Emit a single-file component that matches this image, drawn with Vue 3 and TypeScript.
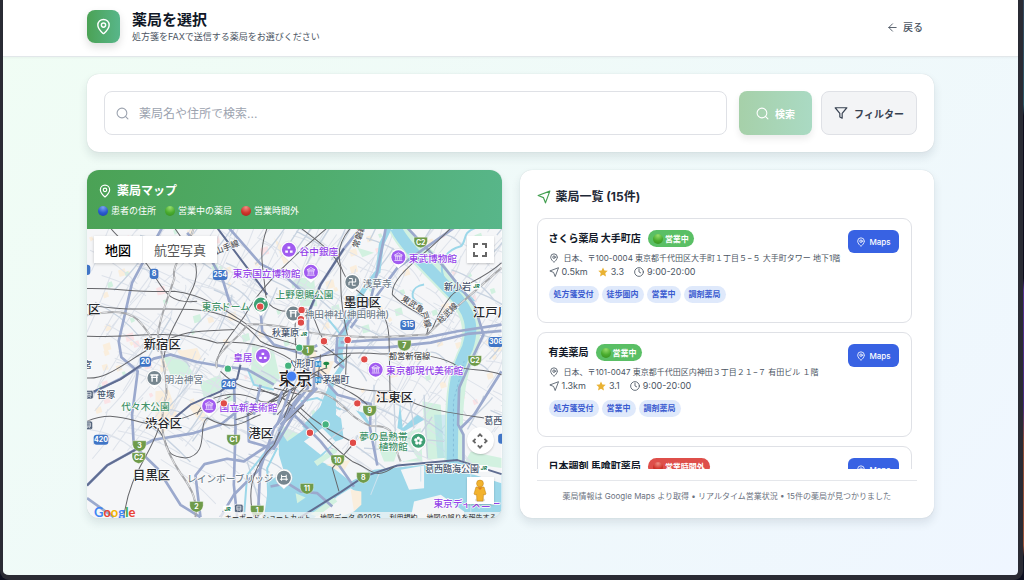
<script setup lang="ts">
import { ref } from 'vue'

interface Store {
  name: string
  open: boolean
  address?: string
  distance?: string
  rating?: string
  hours?: string
  tags: string[]
}
interface Label {
  x: number
  y: number
  text: string
  tone: 'ward' | 'city' | 'culture' | 'park' | 'site' | 'station' | 'line'
  rotate?: number
}

const keyword = ref('')

const stores: Store[] = [
  {
    name: 'さくら薬局 大手町店',
    open: true,
    address: '日本、〒100-0004 東京都千代田区大手町１丁目５−５ 大手町タワー 地下1階',
    distance: '0.5km',
    rating: '3.3',
    hours: '9:00-20:00',
    tags: ['処方箋受付', '徒歩圏内', '営業中', '調剤薬局'],
  },
  {
    name: '有美薬局',
    open: true,
    address: '日本、〒101-0047 東京都千代田区内神田３丁目２１−７ 有田ビル １階',
    distance: '1.3km',
    rating: '3.1',
    hours: '9:00-20:00',
    tags: ['処方箋受付', '営業中', '調剤薬局'],
  },
  { name: '日本調剤 馬喰町薬局', open: false, tags: [] },
]

const legend = [
  { tone: 'blue', text: '患者の住所' },
  { tone: 'green', text: '営業中の薬局' },
  { tone: 'red', text: '営業時間外' },
]

const labels: Label[] = [
  { x: 3, y: 259, text: '区', tone: 'ward' },
  { x: 170, y: 364, text: '新宿区', tone: 'ward' },
  { x: 174, y: 601, text: '渋谷区', tone: 'ward' },
  { x: 138, y: 757, text: '目黒区', tone: 'ward' },
  { x: 484, y: 630, text: '港区', tone: 'ward' },
  { x: 770, y: 236, text: '墨田区', tone: 'ward' },
  { x: 866, y: 521, text: '江東区', tone: 'ward' },
  { x: 1156, y: 266, text: '江戸川', tone: 'ward' },
  { x: 574, y: 470, text: '東京', tone: 'city' },
  { x: 637, y: 80, text: '谷中銀座', tone: 'culture' },
  { x: 437, y: 146, text: '東京国立博物館', tone: 'culture' },
  { x: 964, y: 102, text: '東武博物館', tone: 'culture' },
  { x: 438, y: 399, text: '皇居', tone: 'culture' },
  { x: 896, y: 439, text: '東京都現代美術館', tone: 'culture' },
  { x: 397, y: 549, text: '国立新美術館', tone: 'culture' },
  { x: 1038, y: 837, text: '東京ディズニー', tone: 'culture' },
  { x: 565, y: 211, text: '上野恩賜公園', tone: 'park' },
  { x: 344, y: 245, text: '東京ドーム', tone: 'park' },
  { x: 103, y: 546, text: '代々木公園', tone: 'park' },
  { x: 816, y: 637, text: '夢の島熱帯', tone: 'park' },
  { x: 874, y: 667, text: '植物館', tone: 'park' },
  { x: 826, y: 177, text: '浅草寺', tone: 'site' },
  { x: 652, y: 271, text: '神田神社(神田明神)', tone: 'site' },
  { x: 232, y: 464, text: '明治神宮', tone: 'site' },
  { x: 300, y: 763, text: 'レインボーブリッジ', tone: 'site' },
  { x: 1070, y: 187, text: '新小岩', tone: 'station' },
  { x: 554, y: 325, text: '秋葉原', tone: 'station' },
  { x: 600, y: 416, text: '人形町', tone: 'station' },
  { x: 706, y: 466, text: '茅場町', tone: 'station' },
  { x: 30, y: 510, text: '笹塚', tone: 'station' },
  { x: -12, y: 420, text: '宮', tone: 'station' },
  { x: 1190, y: 587, text: '葛西', tone: 'station' },
  { x: 1013, y: 731, text: '葛西臨海公園', tone: 'station' },
  { x: 904, y: 394, text: '都営新宿線', tone: 'line' },
  { x: 388, y: 80, text: '山手線', tone: 'line', rotate: -22 },
  { x: 812, y: 62, text: '常磐線', tone: 'line', rotate: -72 },
  { x: 940, y: 216, text: '東武亀', tone: 'line', rotate: 33 },
  { x: 1000, y: 254, text: '戸線', tone: 'line', rotate: 72 },
  { x: 1060, y: 288, text: '総武線', tone: 'line', rotate: -45 },
]

const pois = [
  { x: 605, y: 66, kind: 'dots', color: '#a15cf0' },
  { x: 671, y: 132, kind: 'museum', color: '#a15cf0' },
  { x: 933, y: 88, kind: 'museum', color: '#a15cf0' },
  { x: 527, y: 384, kind: 'dots', color: '#a15cf0' },
  { x: 865, y: 425, kind: 'museum', color: '#a15cf0' },
  { x: 366, y: 534, kind: 'museum', color: '#a15cf0' },
  { x: 521, y: 230, kind: 'plain', color: '#3f9f74' },
  { x: 993, y: 638, kind: 'flower', color: '#3f9f74' },
  { x: 795, y: 162, kind: 'temple', color: '#76868f' },
  { x: 618, y: 257, kind: 'shrine', color: '#76868f' },
  { x: 202, y: 450, kind: 'shrine', color: '#76868f' },
  { x: 590, y: 749, kind: 'bridge', color: '#76868f' },
]

const expressways = [
  { x: 1000, y: 43, text: 'C2' },
  { x: 1162, y: 398, text: 'C2' },
  { x: 155, y: 689, text: 'C2' },
  { x: 439, y: 635, text: 'C1' },
  { x: 157, y: 653, text: '3' },
  { x: 328, y: 835, text: '2' },
  { x: 510, y: 847, text: '1' },
  { x: 661, y: 367, text: '1' },
  { x: 951, y: 352, text: '7' },
  { x: 847, y: 548, text: '9' },
  { x: 751, y: 696, text: '10' },
  { x: 828, y: 748, text: '8' },
  { x: 659, y: 781, text: '11' },
]

const routes = [
  { x: 201, y: 138, text: '8', w: 26 },
  { x: 399, y: 141, text: '254', w: 44 },
  { x: 175, y: 401, text: '20', w: 34 },
  { x: 425, y: 469, text: '246', w: 44 },
  { x: 42, y: 635, text: '420', w: 44 },
  { x: 961, y: 291, text: '315', w: 44 },
  { x: 1225, y: 342, text: '308', w: 44 },
  { x: -2, y: 126, text: '', w: 24 },
  { x: 1244, y: 632, text: '', w: 24 },
]

const markers = [
  { x: 519, y: 236, open: false },
  { x: 643, y: 246, open: false },
  { x: 641, y: 274, open: false },
  { x: 641, y: 284, open: false },
  { x: 710, y: 340, open: false },
  { x: 781, y: 336, open: false },
  { x: 831, y: 394, open: false },
  { x: 810, y: 526, open: false },
  { x: 410, y: 526, open: false },
  { x: 668, y: 614, open: false },
  { x: 797, y: 644, open: false },
  { x: 636, y: 359, open: true },
  { x: 603, y: 413, open: true },
  { x: 422, y: 422, open: true },
  { x: 715, y: 589, open: true },
]

const highways = [
  'M225 0 L180 80 L135 165 L95 340 L103 388 L152 430 L135 560 L140 650',
  'M0 503 L100 452 L200 392 L250 380 L330 402 L400 414 L480 424 L560 470',
  'M0 772 L60 712 L150 662 L200 635 L320 615 L400 590 L440 558 L480 520',
  'M150 662 L212 722 L280 830 L340 867',
  'M300 15 L370 92 L408 160 L430 232',
  'M340 867 L325 742 L352 708 L420 692 L470 700 L560 640',
  'M440 450 L445 600 L440 770 L450 867',
  'M480 520 L485 640 L560 662 L620 560 L680 480 L680 395 L740 365',
  'M425 0 L520 108 L600 150 L660 205',
  'M520 245 L525 310 L560 350 L640 376 L690 352',
  'M820 0 L770 62 L700 170 L662 262 L662 480 L600 560 L560 650 L520 700 L512 867',
  'M1242 309 L1140 318 L1030 344 L900 358 L750 360 L745 400 L770 420',
  'M1242 290 L1110 310 L1010 330 L860 336 L760 343',
  'M690 432 L750 500 L850 528 L848 600 L870 712',
  'M620 560 L700 640 L740 690 L800 776',
  'M550 775 L600 765 L640 790 L690 795 L735 835',
  'M960 0 L1065 112 L1160 230 L1188 320 L1150 400 L1115 480 L1112 590 L1128 620 L1128 700',
  'M1100 0 L1000 70 L930 120 L860 215 L790 275 L750 330 L745 395',
  'M790 300 L850 215 L870 130 L890 30 L895 0',
  'M400 867 L440 800 L520 720 L560 600 L640 500',
  'M0 810 L80 867',
  'M1242 430 L1160 560 L1120 600',
]
const trunks = [
  'M640 867 L760 792 L830 745 L930 712 L1110 696 L1242 738',
  'M250 580 L310 530 L400 490 L450 452 L460 410',
  'M660 262 L700 170 L770 62',
  'M390 0 L480 120 L540 200',
  'M0 500 L100 454 L170 405',
  'M0 772 L60 712 L150 662',
]
const railways = [
  'M320 0 C300 70 250 110 262 150 C240 220 220 260 212 320 C230 400 240 460 238 500 C210 600 230 660 280 735 C320 790 330 820 325 867',
  'M0 262 C70 250 130 240 165 290 C200 330 200 350 215 370',
  'M390 420 C370 380 460 330 480 290 C540 285 600 300 630 305 C720 330 790 325 880 328 L1020 320 L1110 235 L1242 120',
  'M640 490 C760 480 760 560 850 594 C940 590 910 640 940 700',
]
const subways = [
  'M0 182 C90 180 150 195 262 190 C350 200 420 250 480 290 C530 330 590 335 640 355',
  'M0 325 C150 330 260 300 390 345 C480 335 560 360 620 400 C700 460 790 480 840 530',
  'M0 230 C150 260 300 225 400 260 C440 270 480 290 520 340 C570 370 620 360 690 370',
  'M70 0 C100 40 140 60 180 110 C230 180 235 230 330 220',
  'M262 0 C320 80 350 125 310 195 C280 270 240 310 230 390',
  'M388 412 C390 360 450 300 475 260 C500 210 550 150 650 60 L720 0',
  'M540 0 C510 80 530 120 535 200 C540 250 600 260 640 240 C690 240 680 310 720 350',
  'M640 0 C690 40 740 70 760 120 C760 190 760 230 780 320 L775 440',
  'M790 0 C730 70 760 130 790 170 C850 230 900 230 905 330 L908 490',
  'M1090 0 C1020 80 910 140 915 200 C980 270 1040 250 1018 318',
  'M700 425 C760 480 820 490 920 490 C980 540 1060 550 1190 570',
  'M640 395 C720 380 790 370 880 378 C980 375 1070 385 1110 415 C1140 430 1190 420 1242 440',
  'M430 505 C350 540 310 575 200 590 C130 580 80 545 0 580',
  'M0 450 C60 455 110 405 200 355 C300 300 350 310 440 305',
  'M215 600 C180 700 130 730 110 867',
  'M210 600 C260 660 220 680 295 690 C370 680 330 590 360 570 C450 620 480 570 520 560',
  'M445 575 C540 550 590 500 620 430 C640 380 610 310 630 250',
  'M400 430 C470 500 520 480 570 500 C650 550 720 650 795 700 C850 720 860 760 920 716',
  'M640 540 C700 600 760 620 800 645 L735 720 L755 790',
  'M330 560 C350 500 450 480 520 520 C600 540 650 430 720 420',
  'M500 867 C470 760 520 690 560 650 L610 540',
  'M1242 105 C1180 160 1120 170 1090 205 C1030 280 1050 300 1015 320',
]
const creeks = [
  'M1165 0 C1120 15 1140 40 1120 55 C1060 70 1050 130 1080 165 C1090 180 1140 190 1160 220',
  'M1010 170 C970 175 960 215 1005 230',
  'M700 245 L760 320 L750 385',
  'M640 520 L690 510 L760 545',
  'M850 640 L930 650 L950 700',
  'M480 420 L500 470 L560 485',
]
const greens = [
  'M495 350 L560 370 L578 450 L545 490 L490 460 Z',
  'M228 384 L290 392 L322 440 L290 468 L250 440 Z',
  'M338 464 L400 440 L410 482 L350 508 Z',
  'M630 150 L680 150 L690 235 L640 235 Z',
  'M580 590 L640 620 L590 670 Z',
  'M940 620 L1000 600 L1005 700 L940 700 Z',
  'M1005 520 L1060 530 L1070 690 L1020 695 Z',
  'M1150 670 L1242 690 L1242 720 L1130 705 Z',
  'M980 25 L1050 80 L1100 150 L1060 150 Z',
  'M810 60 L860 75 L825 88 Z',
]
const sands = [
  'M205 490 L245 485 L270 560 L225 620 L205 560 Z',
  'M270 370 L330 360 L345 395 L290 395 Z',
  'M560 30 L620 90 L590 110 Z',
  'M250 55 L285 75 L260 100 Z',
  'M680 400 L740 400 L720 450 L670 440 Z',
  'M300 530 L345 520 L360 590 L330 570 Z',
  'M860 500 L940 505 L930 525 L860 525 Z',
  'M720 705 L790 690 L770 725 L730 722 Z',
]

/* Repeatable pseudo-random sequence for the side streets. */
let seed = 11
function next(): number {
  seed = (seed * 16807) % 2147483647
  return seed / 2147483647
}
function sideStreets(count: number): string {
  let d = ''
  for (let i = 0; i < count; i++) {
    const x = Math.round(next() * 1242)
    const y = Math.round(next() * 700)
    const angle = next() > 0.5 ? 0.35 + next() * 0.4 : -1.2 + next() * 0.4
    const length = 60 + next() * 160
    const dx = Math.round(Math.cos(angle) * length)
    const dy = Math.round(Math.sin(angle) * length)
    d += `M${x} ${y}q${Math.round(dx / 2 + next() * 24)} ${Math.round(dy / 2 - next() * 24)} ${dx} ${dy}`
  }
  return d
}
function blocks(count: number): string {
  let d = ''
  for (let i = 0; i < count; i++) {
    const x = Math.round(next() * 1220)
    const y = Math.round(next() * 560)
    const s = Math.round(8 + next() * 16)
    d += `M${x} ${y}l${s} ${-Math.round(s / 3)}l5 ${s}l${-s} 6z`
  }
  return d
}
const minorStreets = sideStreets(330)
const midStreets = sideStreets(75)
const sandBlocks = blocks(70)
const parkBlocks = blocks(40)
const careBlocks = blocks(22)

const pinPath = 'M20 10c0 4.993-5.539 10.193-7.399 11.799a1 1 0 0 1-1.202 0C9.539 20.193 4 14.993 4 10a8 8 0 0 1 16 0'
</script>

<template>
  <div class="desktop">
    <div class="window">
      <header class="topbar">
        <div class="container topbar-row">
          <div class="brand">
            <span class="logo">
              <svg class="icon" viewBox="0 0 24 24" width="17" height="17"><path :d="pinPath" /><circle cx="12" cy="10" r="3" /></svg>
            </span>
            <div>
              <h1>薬局を選択</h1>
              <p class="subtitle">処方箋をFAXで送信する薬局をお選びください</p>
            </div>
          </div>
          <button type="button" class="back">
            <svg class="icon" viewBox="0 0 24 24" width="11" height="11"><path d="M20 12H4M12 20l-8-8 8-8" /></svg>
            戻る
          </button>
        </div>
      </header>

      <main class="container content">
        <form class="card search" @submit.prevent>
          <div class="field">
            <svg class="icon" viewBox="0 0 24 24" width="13" height="13"><circle cx="11" cy="11" r="9" /><path d="m22 22-4.5-4.5" /></svg>
            <input v-model="keyword" type="text" placeholder="薬局名や住所で検索..." aria-label="薬局名や住所で検索" />
          </div>
          <div class="search-actions">
            <button type="submit" class="btn-search">
              <svg class="icon" viewBox="0 0 24 24" width="13" height="13"><circle cx="11" cy="11" r="9" /><path d="m22 22-4.5-4.5" /></svg>
              検索
            </button>
            <button type="button" class="btn-filter">
              <svg class="icon" viewBox="0 0 24 24" width="14" height="14"><path d="M22 3H2l8 9.5V19l4 2v-8.500z" /></svg>
              フィルター
            </button>
          </div>
        </form>

        <div class="columns">
          <section class="card map-card">
            <div class="map-head">
              <h2>
                <svg class="icon" viewBox="0 0 24 24" width="14" height="14"><path :d="pinPath" /><circle cx="12" cy="10" r="3" /></svg>
                薬局マップ
              </h2>
              <ul class="legend">
                <li v-for="item in legend" :key="item.text"><i class="ball" :class="item.tone"></i>{{ item.text }}</li>
              </ul>
            </div>
            <div class="map">
              <svg class="map-canvas" viewBox="0 3 1242 867" preserveAspectRatio="xMidYMid slice">
                <rect width="1242" height="870" fill="#f5f6f8" />
                <path class="sand" :d="sandBlocks" />
                <path class="green" :d="parkBlocks" />
                <path class="care" :d="careBlocks" />
                <path v-for="d in sands" :key="d" class="sand" :d="d" />
                <path v-for="d in greens" :key="d" class="green" :d="d" />
                <path class="minor" :d="minorStreets" />
                <path class="mid" :d="midStreets" />
                <path class="bank" d="M930 0 C960 60 1030 120 1085 180 C1150 240 1160 300 1145 360 C1110 430 1105 480 1100 560 L1098 700" />

                <g class="water">
                  <path d="M574 600 L600 640 L650 605 L690 560 L712 500 L728 470 L746 500 L746 560 L785 590 L800 545 L830 555 L850 590 L800 620 L745 640 L700 690 L790 760 L860 725 L1110 700 L1242 735 L1242 870 L530 870 L545 760 L590 730 L575 680 Z" />
                  <path d="M930 600 L938 525 L946 600 L990 560 L1010 575 L950 610 Z" />
                  <path d="M1040 560 L1075 560 L1075 690 L1050 690 Z" opacity="0.4" />
                </g>
                <path class="river" d="M925 0 C955 60 1035 130 1090 190 C1152 250 1160 300 1140 360 C1104 430 1100 480 1096 560 L1094 710" />
                <path class="sumida" d="M906 0 L882 50 L872 130 L830 185 L792 245 L772 310 L758 375 L765 415 L735 460 L715 530 L650 600" />
                <path v-for="d in creeks" :key="d" class="creek" :d="d" />
                <path class="trace" d="M1098 700 L1098 520 L1130 400" />

                <g class="island">
                  <path d="M650 640 L705 600 L745 640 L700 680 Z" />
                  <path d="M760 560 L800 540 L850 600 L930 605 L990 690 L900 712 L860 690 L810 620 L770 640 Z" />
                  <path d="M700 700 L760 660 L840 730 L790 760 L770 730 Z" />
                  <path d="M680 870 L750 805 L790 780 L820 800 L800 850 L750 870 Z" />
                  <path d="M940 725 L1010 712 L1010 780 L965 785 Z" />
                  <path d="M980 820 L1060 800 L1130 850 L1130 870 L970 870 Z" />
                  <path d="M1090 705 L1242 725 L1242 765 L1160 740 L1090 730 Z" />
                </g>
                <path class="green" d="M680 700 L740 660 L750 672 L690 714 Z M625 795 L655 808 L630 825 Z M870 650 L930 670 L920 700 L890 700 Z M670 858 L740 808 L750 820 L690 865 Z" />
                <path class="sand" d="M715 710 L790 695 L770 728 Z M790 785 L822 790 L822 830 L800 850 Z" />
                <path class="mid" d="M865 540 L865 690 M920 520 L925 640 M965 500 L980 600 M1010 500 L1020 690 M840 620 L1070 640 M860 470 L860 530 M830 660 L980 670 M480 700 L530 870 M720 640 L770 600" />
                <path class="creek" d="M545 870 L540 720 L570 660 M560 640 L520 690 L480 740 L470 870" />
                <path class="bay-line" d="M1000 712 V760 M1150 735 V870 M880 725 L850 800" />
                <path v-for="d in highways" :key="d" class="highway" :d="d" />
                <path v-for="d in trunks" :key="d" class="trunk" :d="d" />
                <path v-for="d in subways" :key="d" class="subway" :d="d" />
                <g v-for="d in railways" :key="d">
                  <path class="rail" :d="d" />
                  <path class="rail-dash" :d="d" />
                </g>
                <path class="subway" d="M560 480 L640 500 M545 520 L690 440 M570 560 L660 470 M590 585 L650 530 M480 560 L620 480 M510 480 L610 520 M600 480 L560 560 M625 480 L590 570 M700 380 L690 470 M705 350 L770 400 M740 420 L790 380" />
                <path class="highway" d="M585 490 L560 560 M610 485 L570 590 M640 500 L575 610 M520 470 L500 560 M690 480 L580 590" />

                <g v-for="r in routes" :key="r.x" :transform="`translate(${r.x} ${r.y})`">
                  <rect class="route" :x="-r.w / 2" y="-15" :width="r.w" height="30" rx="9" />
                  <text class="shield-text" y="7">{{ r.text }}</text>
                </g>
                <g v-for="e in expressways" :key="`${e.x}-${e.y}`" :transform="`translate(${e.x} ${e.y})`">
                  <path class="expressway" d="M-20 -15H20V-2Q18 14 0 17Q-18 14 -20 -2Z" />
                  <text class="shield-text" y="8">{{ e.text }}</text>
                </g>

                <g v-for="p in pois" :key="`${p.x}-${p.y}`" :transform="`translate(${p.x} ${p.y})`">
                  <path d="M0 34C-6 26 -25 18 -25 -1A25 25 0 0 1 25 -1C25 18 6 26 0 34Z" fill="#fff" stroke="#c8ccd2" stroke-width="1" />
                  <circle r="21" :fill="p.color" />
                  <path v-if="p.kind === 'museum'" d="M-12 -6L0 -13L12 -6ZM-11 -3h22M-8 -3v11M-3 -3v11M3 -3v11M8 -3v11M-12 10h24" class="glyph thin" />
                  <path v-else-if="p.kind === 'dots'" d="M-4 -10h8v7h-8zM-11 2h8v7h-8zM3 2h8v7h-8z" class="glyph solid" />
                  <path v-else-if="p.kind === 'shrine'" d="M-12 -9h24M-10 -2h20M-7 -9v20M7 -9v20" class="glyph" />
                  <path v-else-if="p.kind === 'temple'" d="M0 -10V10M-10 0H10M-10 -10H0M10 -10V0M0 10H10M-10 0V10" class="glyph slim" />
                  <path v-else-if="p.kind === 'bridge'" d="M-7 -9v18M7 -9v18M-12 4h24M-7 -4h14" class="glyph slim" />
                  <g v-else-if="p.kind === 'flower'" fill="#fff">
                    <circle v-for="a in [0, 72, 144, 216, 288]" :key="a" cy="-8" r="5" :transform="`rotate(${a})`" />
                  </g>
                  <path v-else d="M5 -14l10 -1l-2 9z" fill="#fff" />
                </g>

                <g v-for="t in labels" :key="t.text" :transform="`translate(${t.x} ${t.y}) rotate(${t.rotate ?? 0})`">
                  <text class="label" :class="t.tone">{{ t.text }}</text>
                </g>

                <g v-for="j in [{ x: 1167, y: 175 }, { x: 650, y: 317 }, { x: 1189, y: 721 }, { x: 421, y: 842 }]" :key="j.x" :transform="`translate(${j.x} ${j.y})`">
                  <rect x="-13" y="-10" width="26" height="20" rx="4" fill="#fff" />
                  <text class="jr" y="6">JR</text>
                </g>
                <g v-for="s in [{ x: 6, y: 500 }, { x: 4, y: 592 }, { x: 455, y: 841 }]" :key="s.y" :transform="`translate(${s.x} ${s.y})`">
                  <rect x="-13" y="-13" width="26" height="26" rx="6" fill="#55657d" stroke="#fff" stroke-width="2" />
                  <path d="M-6 -7h12v11h-12zM-5 9l3 -4M5 9l-3 -4M-6 -1h12" fill="none" stroke="#fff" stroke-width="2" />
                </g>
                <g v-for="m in [{ x: 693, y: 408 }, { x: 693, y: 456 }]" :key="m.y" :transform="`translate(${m.x} ${m.y})`">
                  <rect x="-9" y="-9" width="18" height="18" fill="#3d97d3" />
                  <path d="M-5 6v-12M5 6v-12M-5 0h10" stroke="#fff" stroke-width="2" />
                </g>
                <path d="M708 405a10 7 0 0 1 18 0a5 5 0 0 1 -4 6h-3v8h-4v-8h-3a5 5 0 0 1 -4 -6z" fill="#208845" />

                <circle v-for="m in markers" :key="`${m.x}-${m.y}`" :cx="m.x" :cy="m.y" r="11" :fill="m.open ? '#45b37e' : '#e04b48'" stroke="#fff" stroke-width="3" />
                <circle cx="613" cy="445" r="15" fill="#4380f2" stroke="#e9f0ff" stroke-width="2" />
              </svg>

              <div class="map-types">
                <button type="button" class="active">地図</button>
                <button type="button">航空写真</button>
              </div>
              <div class="map-tools">
                <button type="button" class="tool" aria-label="全画面表示">
                  <svg viewBox="0 0 14 14" width="14" height="14"><path d="M1 5V1h4M9 1h4v4M13 9v4H9M5 13H1V9" fill="none" stroke="#666" stroke-width="2" /></svg>
                </button>
                <div class="tool-stack">
                  <button type="button" class="tool round" aria-label="カメラ操作">
                    <svg viewBox="0 0 18 18" width="16" height="16"><path d="M6.500 4 9 1.500 11.500 4M14 6.500 16.500 9 14 11.500M11.500 14 9 16.500 6.500 14M4 11.500 1.500 9 4 6.500" fill="none" stroke="#666" stroke-width="2" /></svg>
                  </button>
                  <button type="button" class="tool" aria-label="ストリートビュー">
                    <svg viewBox="0 0 14 24" width="14" height="24">
                      <ellipse cx="7" cy="21" rx="5" ry="2" fill="#ddd" />
                      <path d="M3 8h8l2 7-1.500 1-1-1-.5 7H4l-.5-7-1 1L1 15z" fill="#f3b32d" stroke="#c8891c" stroke-width=".6" />
                      <circle cx="7" cy="4.500" r="3.400" fill="#f3b32d" stroke="#c8891c" stroke-width=".6" />
                      <path d="M4.500 8.500h5L7 11z" fill="#dd7c27" />
                    </svg>
                  </button>
                </div>
              </div>
              <div class="google" aria-label="Google"><b class="g1">G</b><b class="g2">o</b><b class="g3">o</b><b class="g1">g</b><b class="g4">l</b><b class="g2">e</b></div>
              <div class="credits"><button type="button">キーボード ショートカット</button><span>地図データ ©2025</span><a href="#">利用規約</a><a href="#">地図の誤りを報告する</a></div>
            </div>
          </section>

          <section class="card list-card">
            <h2>
              <svg class="icon" viewBox="0 0 24 24" width="14" height="14"><path d="M22 2 2 9.500l9 3.500 3.500 9z" /></svg>
              薬局一覧 (15件)
            </h2>
            <div class="scroller">
              <article v-for="s in stores" :key="s.name" class="store">
                <div class="store-main">
                  <div class="name-row">
                    <h3>{{ s.name }}</h3>
                    <span class="status" :class="{ closed: !s.open }"><i class="ball" :class="s.open ? 'green' : 'red'"></i>{{ s.open ? '営業中' : '営業時間外' }}</span>
                  </div>
                  <p v-if="s.address" class="address">
                    <svg class="icon" viewBox="0 0 24 24" width="10" height="10"><path :d="pinPath" /><circle cx="12" cy="10" r="3" /></svg>
                    {{ s.address }}
                  </p>
                  <div v-if="s.distance" class="meta">
                    <span><svg class="icon" viewBox="0 0 24 24" width="10" height="10"><path d="M22 2 2 9.500l9 3.500 3.500 9z" /></svg>{{ s.distance }}</span>
                    <span><svg viewBox="0 0 24 24" width="10" height="10"><path d="m12 1 3.400 7.200 7.900 1-5.800 5.400 1.500 7.900-7-3.900-7 3.900 1.500-7.900L.7 9.200l7.900-1z" fill="#e9b233" /></svg>{{ s.rating }}</span>
                    <span><svg class="icon" viewBox="0 0 24 24" width="10" height="10"><circle cx="12" cy="12" r="10.500" /><path d="M12 5v7l4 2" /></svg>{{ s.hours }}</span>
                  </div>
                  <div class="tags"><span v-for="t in s.tags" :key="t">{{ t }}</span></div>
                </div>
                <button type="button" class="maps">
                  <svg class="icon" viewBox="0 0 24 24" width="10" height="10"><path :d="pinPath" /><circle cx="12" cy="10" r="3" /></svg>
                  Maps
                </button>
              </article>
            </div>
            <p class="note">薬局情報は Google Maps より取得 • リアルタイム営業状況 • 15件の薬局が見つかりました</p>
          </section>
        </div>
      </main>
    </div>
  </div>
</template>

<style>
body {
  margin: 0;
}
</style>

<style scoped>
.desktop,
.desktop * {
  box-sizing: border-box;
}
.desktop {
  display: flex;
  min-height: 100vh;
  padding-right: 1px;
  background: linear-gradient(#34465a 0%, #2b5565 18%, #0c0b1c 20%, #0c0b1c 48%, #51308f 50%, #452a80 70%, #8a4a35 76%, #9a5238 94%, #0d1020 96%);
  font-family: Inter, "Noto Sans CJK JP", sans-serif;
  color: #1f2937;
}
.window {
  flex: 1;
  min-width: 0;
  border: solid #2a2b34;
  border-width: 0 5px 5px 3px;
  border-radius: 0 0 9px 9px;
  background: linear-gradient(135deg, #f0fdf4, #eff6ff);
}
h1,
h2,
h3,
p,
ul {
  margin: 0;
  padding: 0;
}
button,
input {
  font-family: inherit;
  margin: 0;
  border: 0;
  padding: 0;
  color: inherit;
}
.icon {
  flex: none;
  fill: none;
  stroke: currentColor;
  stroke-width: 2;
  stroke-linecap: round;
  stroke-linejoin: round;
}
.container {
  max-width: 847px;
  margin: 0 auto;
}
.topbar {
  background: #fff;
  border-bottom: 1px solid #e2e7ea;
  box-shadow: 0 1px 2px rgba(0, 0, 0, 0.04);
}
.topbar-row {
  display: flex;
  align-items: center;
  justify-content: space-between;
  padding: 10px 0 12px;
}
.brand {
  display: flex;
  gap: 12px;
}
.logo {
  display: flex;
  align-items: center;
  justify-content: center;
  width: 33px;
  height: 33px;
  border-radius: 8px;
  color: #fff;
  background: linear-gradient(90deg, #4ba255, #58b68a);
  box-shadow: 0 4px 8px rgba(0, 0, 0, 0.13);
}
h1 {
  font-size: 15px;
  line-height: 20px;
  font-weight: 700;
  color: #111827;
}
.subtitle {
  font-size: 9px;
  line-height: 14px;
  color: #4b5563;
}
.back {
  display: flex;
  align-items: center;
  gap: 5px;
  padding: 6px 11px;
  font-size: 10px;
  line-height: 14px;
  font-weight: 500;
  color: #4b5563;
  background: none;
}
.content {
  display: grid;
  gap: 18px;
  padding: 17px 0 52px;
}
.card {
  background: #fff;
  border-radius: 12px;
  box-shadow: 0 5px 10px rgba(30, 50, 60, 0.11), 0 0 1px rgba(30, 50, 60, 0.2);
}
.search {
  display: flex;
  gap: 12px;
  padding: 17px;
}
.field {
  display: flex;
  flex: 1;
  align-items: center;
  gap: 10px;
  height: 44px;
  padding: 0 11px;
  border: 1px solid #dfe1e6;
  border-radius: 8px;
  color: #9ca3af;
}
.field input {
  flex: 1;
  min-width: 0;
  height: 100%;
  font-size: 12px;
  outline: 0;
  background: none;
  color: #1f2937;
}
.field input::placeholder {
  color: #9ca3af;
}
.search-actions {
  display: flex;
  gap: 9px;
}
.btn-search,
.btn-filter {
  display: flex;
  align-items: center;
  justify-content: center;
  gap: 6px;
  height: 44px;
  border-radius: 8px;
  font-size: 10px;
  font-weight: 700;
}
.btn-search {
  width: 73px;
  color: #fff;
  background: linear-gradient(90deg, #a6d0a9, #aadac3);
  box-shadow: 0 4px 7px rgba(0, 0, 0, 0.08);
}
.btn-filter {
  width: 96px;
  border: 1px solid #dfe1e6;
  color: #374151;
  background: #f3f4f6;
}
.columns {
  display: grid;
  grid-template-columns: 1fr 1fr;
  gap: 18px;
}
.map-card {
  display: flex;
  flex-direction: column;
  overflow: hidden;
}
.map-head {
  padding: 12px 11px 11px;
  color: #fff;
  background: linear-gradient(100deg, #4ba255, #50ad6e 55%, #58b68a);
}
h2 {
  display: flex;
  align-items: center;
  font-size: 12px;
  line-height: 18px;
  font-weight: 700;
}
.map-head h2 {
  gap: 5px;
}
.legend {
  display: flex;
  gap: 9px;
  margin-top: 4px;
  list-style: none;
  font-size: 9px;
  line-height: 14px;
}
.legend li {
  display: flex;
  align-items: center;
  gap: 3px;
}
.ball {
  width: 10px;
  height: 10px;
  border-radius: 50%;
}
.ball.blue {
  background: radial-gradient(circle at 50% 15%, #7ba3ee, #2a5ad0 55%, #1d43a8);
}
.ball.green {
  background: radial-gradient(circle at 50% 15%, #96dd6c, #49ac2e 55%, #378c20);
}
.ball.red {
  background: radial-gradient(circle at 50% 15%, #ef8f84, #d0342b 55%, #a8241d);
}
.map {
  position: relative;
  flex: 1;
  min-height: 240px;
  overflow: hidden;
}
.map-canvas {
  position: absolute;
  inset: 0;
  width: 100%;
  height: 100%;
}
.map-canvas path {
  stroke-linejoin: round;
}
.sand {
  fill: #faeedd;
}
.green {
  fill: #d2f1e0;
}
.care {
  fill: #fbe3e6;
}
.minor,
.mid,
.bank,
.river,
.sumida,
.creek,
.trace,
.bay-line,
.highway,
.trunk,
.subway,
.rail,
.rail-dash {
  fill: none;
}
.minor {
  stroke: #dde2ea;
  stroke-width: 3;
}
.mid {
  stroke: #c8d3e0;
  stroke-width: 4;
}
.bank {
  stroke: #d2f1e0;
  stroke-width: 54;
}
.water {
  fill: #9cd7e9;
}
.river {
  stroke: #9cd7e9;
  stroke-width: 34;
}
.sumida {
  stroke: #9cd7e9;
  stroke-width: 15;
}
.creek {
  stroke: #9cd7e9;
  stroke-width: 6;
}
.trace {
  stroke: #79b1d3;
  stroke-width: 2;
  stroke-dasharray: 8 7;
}
.island {
  fill: #f3f5f7;
}
.bay-line {
  stroke: #cce3ef;
  stroke-width: 3;
}
.highway {
  stroke: #9ba9cd;
  stroke-width: 8;
}
.trunk {
  stroke: #606d91;
  stroke-width: 6;
}
.subway {
  stroke: #66676b;
  stroke-width: 3;
}
.rail {
  stroke: #a6a7aa;
  stroke-width: 6;
}
.rail-dash {
  stroke: #dedfe1;
  stroke-width: 3;
  stroke-dasharray: 22 18;
}
.route {
  fill: #4075c6;
}
.expressway {
  fill: #6f9b4a;
  stroke: #fff;
  stroke-width: 1;
}
.shield-text {
  font-size: 21px;
  font-weight: 700;
  fill: #fff;
  text-anchor: middle;
}
.glyph {
  fill: none;
  stroke: #fff;
  stroke-width: 4;
}
.glyph.slim {
  stroke-width: 3;
}
.glyph.thin {
  stroke-width: 2;
}
.glyph.solid {
  fill: #fff;
  stroke: none;
}
.label {
  font-size: 29px;
  font-weight: 500;
  paint-order: stroke;
  stroke: #fff;
  stroke-width: 4;
  stroke-linejoin: round;
}
.ward {
  font-size: 37px;
  fill: #26282c;
}
.city {
  font-size: 51px;
  fill: #1f2124;
}
.culture {
  fill: #9344e8;
}
.park {
  fill: #43936a;
}
.site {
  fill: #74838f;
}
.station {
  font-size: 27px;
  fill: #48566e;
}
.line {
  font-size: 25px;
  fill: #55565a;
}
.jr {
  font-size: 15px;
  font-weight: 800;
  font-style: italic;
  fill: #287d56;
  text-anchor: middle;
}
.map-types {
  position: absolute;
  top: 7px;
  left: 7px;
  display: flex;
  height: 27px;
  box-shadow: 0 1px 3px rgba(0, 0, 0, 0.2);
}
.map-types button {
  padding: 0 11px;
  font-size: 13px;
  color: #565656;
  background: #fff;
}
.map-types .active {
  font-weight: 500;
  color: #000;
  border-right: 1px solid #eee;
}
.map-tools {
  position: absolute;
  top: 7px;
  right: 8px;
  bottom: 14px;
  display: flex;
  flex-direction: column;
  justify-content: space-between;
}
.tool-stack {
  display: grid;
  gap: 23px;
}
.tool {
  display: flex;
  align-items: center;
  justify-content: center;
  width: 27px;
  height: 27px;
  background: #fff;
  box-shadow: 0 1px 2px rgba(0, 0, 0, 0.2);
}
.round {
  border-radius: 50%;
}
.google {
  position: absolute;
  left: 7px;
  bottom: -3px;
  font-family: Lato, sans-serif;
  font-size: 13px;
  line-height: 18px;
}
.google b {
  font-weight: 700;
}
.g1 {
  color: #4285f4;
}
.g2 {
  color: #ea4335;
}
.g3 {
  color: #f4b400;
}
.g4 {
  color: #34a853;
}
.credits {
  position: absolute;
  right: 0;
  bottom: -5px;
  display: flex;
  gap: 9px;
  padding: 0 5px;
  font-size: 7px;
  line-height: 11px;
  color: #222;
  background: rgba(245, 245, 245, 0.75);
}
.credits button,
.credits a {
  font-size: 7px;
  line-height: 11px;
  background: none;
  color: inherit;
  text-decoration: none;
}
.list-card {
  padding: 17px 17px 15px;
}
.list-card h2 {
  gap: 5px;
  line-height: 20px;
  color: #1f2937;
}
.list-card h2 .icon {
  color: #45a052;
}
.scroller {
  display: grid;
  gap: 9px;
  height: 251px;
  margin-top: 11px;
  padding-right: 5px;
  overflow-y: auto;
  scrollbar-width: none;
}
.store {
  display: flex;
  align-items: flex-start;
  justify-content: space-between;
  min-height: 105px;
  padding: 11px 12px 17px 11px;
  border: 1px solid #dfe1e6;
  border-radius: 9px;
}
.name-row {
  display: flex;
  align-items: center;
  gap: 7px;
  height: 17px;
}
.store-main {
  flex: 1;
  min-width: 0;
}
h3 {
  font-size: 10px;
  line-height: 17px;
  font-weight: 700;
  color: #111827;
}
.status {
  display: flex;
  align-items: center;
  gap: 2px;
  height: 17px;
  padding: 0 5px;
  border-radius: 9px;
  font-size: 8px;
  font-weight: 700;
  color: #fff;
  background: #5abf65;
}
.status.closed {
  background: #de4f4a;
}
.address {
  display: flex;
  align-items: center;
  gap: 5px;
  margin-top: 4px;
  font-size: 8px;
  line-height: 14px;
  white-space: nowrap;
  color: #4b5563;
}
.meta {
  display: flex;
  gap: 10px;
  font-size: 9px;
  line-height: 14px;
  color: #4b5563;
}
.meta span {
  display: flex;
  align-items: center;
  gap: 3px;
}
.tags {
  display: flex;
  gap: 3px;
  margin-top: 7px;
}
.tags span {
  padding: 0 5px;
  border-radius: 9px;
  font-size: 8px;
  line-height: 17px;
  font-weight: 700;
  color: #3a5bd0;
  background: #dfe9fb;
}
.maps {
  display: flex;
  flex: none;
  align-items: center;
  justify-content: center;
  gap: 3px;
  width: 51px;
  height: 23px;
  margin-left: -51px;
  border-radius: 6px;
  font-size: 8px;
  font-weight: 500;
  color: #fff;
  background: #3862e3;
}
.note {
  margin-top: 11px;
  padding-top: 8px;
  border-top: 1px solid #e5e7eb;
  font-size: 8px;
  line-height: 14px;
  text-align: center;
  color: #6b7280;
}
</style>
